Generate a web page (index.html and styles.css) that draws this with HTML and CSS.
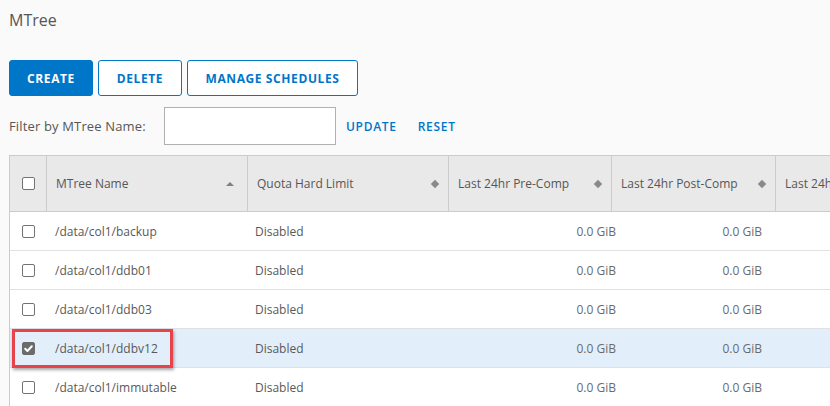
FILE: index.html
```html
<!DOCTYPE html>
<html>
<head>
<meta charset="utf-8">
<link rel="stylesheet" href="styles.css">
</head>
<body>
<div class="page">
  <h1 class="title">MTree</h1>
  <div class="actions">
    <button class="btn btn-primary">CREATE</button>
    <button class="btn btn-outline">DELETE</button>
    <button class="btn btn-outline">MANAGE SCHEDULES</button>
  </div>
  <div class="filter">
    <label class="filter-label">Filter by MTree Name:</label>
    <input class="filter-input" type="text">
    <a class="link">UPDATE</a>
    <a class="link">RESET</a>
  </div>
  <div class="grid">
    <div class="head">
      <div class="hcell hcheck"><span class="cb"></span></div>
      <div class="hcell"><span>MTree Name</span><span class="sort-up"></span></div>
      <div class="hcell"><span>Quota Hard Limit</span><span class="diamond"></span></div>
      <div class="hcell"><span>Last 24hr Pre-Comp</span><span class="diamond"></span></div>
      <div class="hcell"><span>Last 24hr Post-Comp</span><span class="diamond"></span></div>
      <div class="hcell hlast"><span>Last 24h</span></div>
    </div>
    <div class="row">
      <div class="cell ccheck"><span class="cb"></span></div>
      <div class="cell name">/data/col1/backup</div>
      <div class="cell quota">Disabled</div>
      <div class="cell num pre">0.0 GiB</div>
      <div class="cell num post">0.0 GiB</div>
      <div class="cell"></div>
    </div>
    <div class="row">
      <div class="cell ccheck"><span class="cb"></span></div>
      <div class="cell name">/data/col1/ddb01</div>
      <div class="cell quota">Disabled</div>
      <div class="cell num pre">0.0 GiB</div>
      <div class="cell num post">0.0 GiB</div>
      <div class="cell"></div>
    </div>
    <div class="row">
      <div class="cell ccheck"><span class="cb"></span></div>
      <div class="cell name">/data/col1/ddb03</div>
      <div class="cell quota">Disabled</div>
      <div class="cell num pre">0.0 GiB</div>
      <div class="cell num post">0.0 GiB</div>
      <div class="cell"></div>
    </div>
    <div class="row selected">
      <div class="cell ccheck"><span class="cb checked"><svg viewBox="0 0 13 13" width="13" height="13"><path d="M3.2 6.8 L5.4 9 L9.8 4.2" fill="none" stroke="#fff" stroke-width="2" stroke-linecap="round" stroke-linejoin="round"/></svg></span></div>
      <div class="cell name">/data/col1/ddbv12</div>
      <div class="cell quota">Disabled</div>
      <div class="cell num pre">0.0 GiB</div>
      <div class="cell num post">0.0 GiB</div>
      <div class="cell"></div>
      <div class="callout"></div>
    </div>
    <div class="row">
      <div class="cell ccheck"><span class="cb"></span></div>
      <div class="cell name">/data/col1/immutable</div>
      <div class="cell quota">Disabled</div>
      <div class="cell num pre">0.0 GiB</div>
      <div class="cell num post">0.0 GiB</div>
      <div class="cell"></div>
    </div>
  </div>
</div>
</body>
</html>
```

FILE: styles.css
```css
* { box-sizing: border-box; }
html, body {
  margin: 0;
  padding: 0;
  background: #fafafa;
  overflow: hidden;
  width: 830px;
  height: 406px;
}
body {
  font-family: "Open Sans", "Liberation Sans", sans-serif;
  color: #565656;
}
.page {
  padding: 0 0 0 9px;
}
.title {
  margin: 0;
  padding-top: 9px;
  height: 60px;
  font-size: 16px;
  font-weight: 400;
  line-height: 22px;
  color: #565656;
}
.actions {
  display: flex;
  gap: 5px;
  height: 36px;
}
.btn {
  height: 36px;
  border-radius: 3px;
  font-family: inherit;
  font-size: 12px;
  font-weight: 700;
  letter-spacing: 0.6px;
  padding: 0 12px;
  cursor: pointer;
}
.btn-primary {
  background: #0076c8;
  border: 1px solid #0076c8;
  color: #fff;
  width: 84px;
}
.btn-outline {
  background: #fff;
  border: 1px solid #0076c8;
  color: #0076c8;
}
.actions .btn-outline:nth-child(2) { width: 84px; }
.actions .btn-outline:nth-child(3) { width: 171px; }
.filter {
  display: flex;
  align-items: center;
  margin-top: 11px;
  height: 38px;
}
.filter-label {
  font-size: 13px;
  letter-spacing: 0.15px;
  width: 155px;
  white-space: nowrap;
}
.filter-input {
  width: 172px;
  height: 38px;
  border: 1px solid #b0b0b0;
  background: #fff;
  margin: 0;
  outline: none;
}
.link {
  color: #0076c8;
  font-size: 12px;
  font-weight: 600;
  letter-spacing: 0.7px;
  margin-left: 10px;
}
.link + .link { margin-left: 21px; }
.grid {
  margin-top: 10px;
  width: 821px;
  overflow: hidden;
  border-left: 1px solid #cccccc;
  border-top: 1px solid #cccccc;
  background: #fff;
}
.head {
  display: grid;
  grid-template-columns: 37px 201px 201px 163px 164px 1fr;
  height: 56px;
  background: #e9e9e9;
  border-bottom: 1px solid #cccccc;
}
.hcell {
  display: flex;
  align-items: center;
  justify-content: space-between;
  padding: 0 10px 0 9px;
  font-size: 12px;
  color: #565656;
  border-right: 1px solid #cccccc;
  white-space: nowrap;
  overflow: hidden;
}
.hcell.hlast { border-right: none; }
.hcell:nth-child(2) { padding-right: 13px; }
.hcell.hcheck {
  justify-content: center;
  padding: 0;
}
.cb {
  display: inline-block;
  width: 13px;
  height: 13px;
  border: 1px solid #737373;
  border-radius: 2px;
  background: #fff;
}
.cb.checked {
  background: #6b6b6b;
  border-color: #6b6b6b;
}
.cb.checked svg { display: block; margin: -1px; }
.sort-up {
  width: 0;
  height: 0;
  border-left: 4px solid transparent;
  border-right: 4px solid transparent;
  border-bottom: 4px solid #808080;
}
.diamond {
  width: 6px;
  height: 6px;
  background: #8a8a8a;
  transform: rotate(45deg);
  flex: none;
}
.row {
  position: relative;
  display: grid;
  grid-template-columns: 37px 201px 201px 179px 148px 1fr;
  height: 39px;
  border-bottom: 1px solid #e1e1e1;
  align-items: center;
  font-size: 12px;
  color: #595959;
}
.row.selected { background: #e2effb; }
.cell { white-space: nowrap; }
.ccheck {
  display: flex;
  justify-content: center;
}
.name { padding-left: 8px; }
.quota { padding-left: 7px; }
.num { text-align: right; color: #6a6a6a; }
.pre { padding-right: 12px; }
.post { padding-right: 14px; }
.callout {
  position: absolute;
  left: 2px;
  top: 0;
  width: 161px;
  height: 39px;
  border: 3px solid #e8434a;
  box-shadow: 1px 2px 3px rgba(0, 0, 0, 0.35);
}
```
